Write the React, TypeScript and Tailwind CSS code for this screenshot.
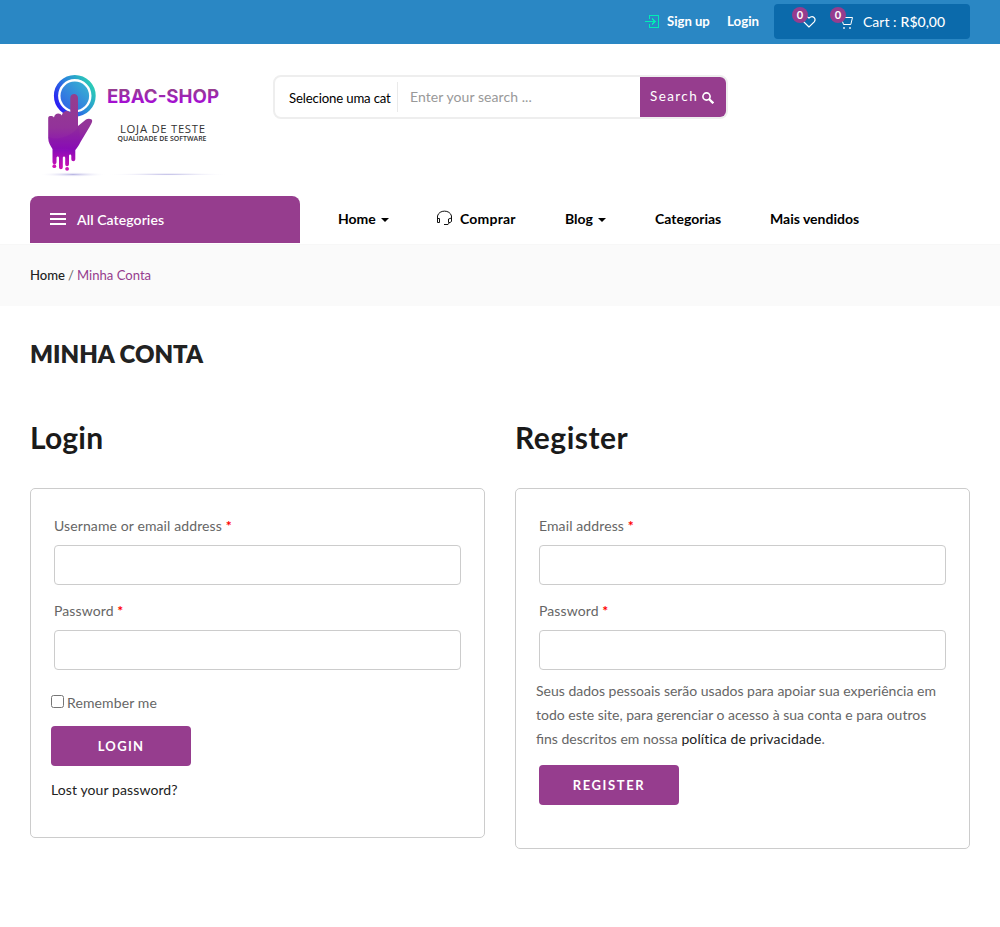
import React from "react";

function Logo() {
  return (
    <svg width="210" height="125" viewBox="30 60 210 125" className="block" aria-label="EBAC-SHOP">
      <defs>
        <linearGradient id="ring" x1="0" y1="0.8" x2="1" y2="0.2">
          <stop offset="0" stopColor="#2a14f5" />
          <stop offset="0.5" stopColor="#2a86dc" />
          <stop offset="1" stopColor="#2bd0b4" />
        </linearGradient>
        <linearGradient id="disc" x1="0" y1="1" x2="1" y2="0">
          <stop offset="0" stopColor="#2f5ee8" />
          <stop offset="1" stopColor="#38b9d0" />
        </linearGradient>
        <linearGradient id="hand" x1="0" y1="0" x2="0" y2="1">
          <stop offset="0" stopColor="#943f8e" />
          <stop offset="0.45" stopColor="#93329a" />
          <stop offset="0.75" stopColor="#8b0cb8" />
          <stop offset="1" stopColor="#d010b4" />
        </linearGradient>
        <linearGradient id="word" x1="0" y1="0" x2="0" y2="1">
          <stop offset="0.2" stopColor="#963f90" />
          <stop offset="0.8" stopColor="#a40ed2" />
        </linearGradient>
        <radialGradient id="shade">
          <stop offset="0" stopColor="#b9b6e4" />
          <stop offset="1" stopColor="#ffffff" stopOpacity="0" />
        </radialGradient>
      </defs>
      <circle cx="74.8" cy="95.8" r="18.8" fill="#fff" stroke="url(#ring)" strokeWidth="4.200" />
      <circle cx="74.8" cy="95.8" r="14.3" fill="url(#disc)" />
      <path
        d="M70.300 98C70.300 92.700 78 92.700 78 98V126L86 119.500C88 118 92.500 118.500 92.200 121C92 123 90.500 125 89.500 127L80.500 142C78.500 146 77 148 75.300 150V159C75.300 162 71.300 162 71.300 159V156C71.300 154 69 154 69 156V164C69 167 65.200 167 65.200 164V158C65.200 156 62.800 156 62.800 158V167C62.800 170 59 170 59 167V158C59 156 56.500 156 56.500 158V162C56.500 165 52.500 165 52.500 162V149C50.500 145.500 48.200 142.500 48.200 138V118C48.200 115.500 52.500 115.500 54 117.500C54.500 112.500 60.500 112.500 61.800 115.500C62.500 110.500 68.800 109.500 70.300 113Z"
        fill="url(#hand)"
      />
      <path d="M48.500 137C58 141 73 136 79 126L80.500 142L75.300 150C65 148 58 149 52.500 149Z" fill="#7800b0" opacity=".15" />
      <circle cx="54.300" cy="166.200" r="1.900" fill="#cf12b5" />
      <circle cx="67.100" cy="168.800" r="1.900" fill="#cf12b5" />
      <ellipse cx="73" cy="174.500" rx="34" ry="2.500" fill="url(#shade)" />
      <ellipse cx="168" cy="174.300" rx="62" ry="1.500" fill="url(#shade)" />
      <text x="107" y="102.800" textLength="112" lengthAdjust="spacingAndGlyphs" fontFamily="Inter, sans-serif" fontWeight="700" fontSize="18.500" fill="url(#word)">EBAC-SHOP</text>
      <text x="120" y="133.200" textLength="85" lengthAdjust="spacing" fontFamily="'Open Sans', sans-serif" fontSize="11.300" fill="#333">LOJA DE TESTE</text>
      <text x="117.500" y="141" textLength="89" lengthAdjust="spacingAndGlyphs" fontFamily="'Open Sans', sans-serif" fontWeight="600" fontSize="7" fill="#333">QUALIDADE DE SOFTWARE</text>
    </svg>
  );
}

function Badge() {
  return (
    <span className="absolute -left-[17px] -top-[14px] flex h-4 w-4 items-center justify-center rounded-full bg-[#963d8e] text-[11px] leading-4 font-bold text-white">0</span>
  );
}

function TopBar() {
  return (
    <div className="flex h-11 items-start bg-[#2a87c4] pl-[645px] text-sm text-white">
      <svg width="15" height="15" viewBox="0 0 15 15" className="mt-[14px] shrink-0" fill="none" stroke="#00eeb5" shapeRendering="crispEdges">
        <path d="M4.500 5V1.500h9v12h-9V10M0 7.500h9" />
        <path d="M7 4.500l3 3-3 3" />
      </svg>
      <a className="ml-[7px] mt-[11px] w-[60px] text-[13.100px] leading-5 font-bold">Sign up</a>
      <a className="mt-[11px] w-[47px] text-[13.300px] leading-5 font-bold">Login</a>
      <div className="mt-1 flex h-[35px] w-[196px] items-start rounded bg-[#0b6aab]">
        <span className="relative ml-[35px] mt-[17px] h-4 w-8">
          <svg width="14" height="13" viewBox="0 0 14 13" className="absolute -left-[7px] -top-[6px]" fill="none" stroke="#fff" strokeWidth="1.200">
            <path d="M7 12L1.800 6.800C-.4 4 2.800-.6 7 3c4.200-3.600 7.400 1 5.200 3.800z" />
          </svg>
          <Badge />
        </span>
        <span className="relative ml-[6px] mt-[17px] h-4 w-4">
          <svg width="14" height="14" viewBox="0 0 14 14" className="absolute -left-[7px] -top-[5px]" fill="none" stroke="#fff">
            <path d="M2 1.500H12.500L10.800 8.500H3.500L2.500 5.500" />
            <path d="M3.500 11.500h1v1h-1zM9.500 11.500h1v1h-1z" fill="#fff" strokeWidth=".6" />
          </svg>
          <Badge />
        </span>
        <span className="mt-[7px] text-[14px] leading-[21px] whitespace-nowrap">Cart : <span className="ml-[0.500px] font-medium">R$0,00</span></span>
      </div>
    </div>
  );
}

function SearchForm() {
  return (
    <form className="ml-[33px] mt-[15px] flex h-[44px] w-[455px] overflow-hidden rounded-lg border-2 border-[#eee] bg-white">
      <div className="my-[5px] flex w-[123px] shrink-0 items-center border-r border-[#eaeaea] pl-[14px] pt-[3px] text-[13.200px] tracking-[-0.160px] whitespace-nowrap text-black">
        <span>Selecione uma cat</span>
      </div>
      <div className="flex flex-1 items-center pb-px pl-3 text-[14px] tracking-[0.070px] text-[#999]">Enter your search ...</div>
      <button type="button" className="flex w-[86px] items-center bg-[#963d8e] pb-px pl-[10px] text-[13.500px] tracking-[1.400px] text-white">
        Search
        <svg width="12" height="12" viewBox="0 0 12 12" className="ml-[4px] mt-[2px]" fill="none" stroke="#fff">
          <circle cx="4.500" cy="4.500" r="3.600" strokeWidth="1.600" />
          <path d="M7 7l4.300 4.300" strokeWidth="2.300" />
        </svg>
      </button>
    </form>
  );
}

function Caret() {
  return <span className="ml-[5px] mt-1 inline-block border-x-4 border-t-4 border-x-transparent border-t-black" />;
}

function Nav() {
  return (
    <nav className="flex h-12 items-start pl-[30px] text-[14px] font-bold text-black">
      <div className="flex h-[47px] w-[270px] items-center rounded-t-lg bg-[#963d8e] pb-px pl-5 font-semibold text-white">
        <span className="flex h-3 w-4 flex-col justify-between">
          <i className="h-[2px] bg-white" /><i className="h-[2px] bg-white" /><i className="h-[2px] bg-white" />
        </span>
        <span className="ml-[11px] pt-[1px] tracking-[0.080px]">All Categories</span>
      </div>
      <div className="ml-[38px] flex h-[44px] items-center whitespace-nowrap">
        <a className="flex w-[99px] items-center">Home<Caret /></a>
        <a className="flex w-[128px] items-center">
          <svg width="16" height="16" viewBox="0 0 16 16" className="mr-[7px]" fill="none" stroke="#111">
            <path d="M.5 12.500V6C2-.5 13-.5 14.500 6V11.500L13 12.500H11.500V9L14.500 8M.5 8.500H2.500V12.500H.5M12.500 12.500L11 14.500H7" />
          </svg>
          <span className="tracking-[0.200px]">Comprar</span>
        </a>
        <a className="flex w-[90px] items-center">Blog<Caret /></a>
        <a className="w-[115px]">Categorias</a>
        <a>Mais vendidos</a>
      </div>
    </nav>
  );
}

function Field({ label }: { label: string }) {
  return (
    <label className="mb-[14px] block px-[3px]">
      <span className="block h-[31px] leading-6 tracking-[0.110px]">{label} <span className="font-bold text-[#f00]">*</span></span>
      <input className="block h-10 w-full rounded border border-[#ccc] bg-white" />
    </label>
  );
}

function AccountPanels() {
  return (
    <div className="flex items-start gap-[30px] px-[30px]">
      <section className="w-[455px]">
        <h2 className="h-[71px] text-[30px] leading-[40px] font-bold tracking-[0.200px] text-[#1a1a1a]">Login</h2>
        <form className="h-[350px] rounded-[5px] border border-[#ccc] px-5 pt-[25px]">
          <Field label="Username or email address" />
          <Field label="Password" />
          <div className="mt-[20px] flex h-6 items-center tracking-[0.120px]">
            <input type="checkbox" className="-mt-[1px] mr-[3px] h-[13px] w-[13px]" />
            Remember me
          </div>
          <button type="button" className="mt-[12px] h-10 w-[140px] rounded bg-[#963d8e] pt-px text-[13px] font-bold tracking-[1.300px] text-white">LOGIN</button>
          <p className="mt-[12px] leading-6 tracking-[0.100px] text-[#222]">Lost your password?</p>
        </form>
      </section>
      <section className="w-[455px]">
        <h2 className="h-[71px] text-[30px] leading-[40px] font-bold tracking-[0.500px] text-[#1a1a1a]">Register</h2>
        <form className="h-[361px] rounded-[5px] border border-[#ccc] px-5 pt-[25px]">
          <Field label="Email address" />
          <Field label="Password" />
          <p className="-mt-[5px] leading-6 whitespace-nowrap">
            Seus dados pessoais serão usados para apoiar sua experiência em<br />
            todo este site, para gerenciar o acesso à sua conta e para outros<br />
            fins descritos em nossa <span className="tracking-[0.120px] text-[#222]">política de privacidade</span>.
          </p>
          <button type="button" className="ml-[3px] mt-[14px] h-10 w-[140px] rounded bg-[#963d8e] pt-px text-[13px] font-bold tracking-[1.600px] text-white">REGISTER</button>
        </form>
      </section>
    </div>
  );
}

export default function App() {
  return (
    <div className="h-[927px] w-[1000px] overflow-hidden bg-white font-['Lato',sans-serif] text-[14px] text-[#666]">
      <TopBar />
      <header className="flex h-[152px] items-start pl-[30px] pt-4">
        <Logo />
        <SearchForm />
      </header>
      <Nav />
      <div className="flex h-[62px] items-center border-t border-[#f7f7f7] bg-[#fafafa] pl-[30px] text-[13.100px]">
        <span className="font-medium text-[#222]">Home</span>
        <span className="px-[3px]">/</span>
        <span className="text-[#963d8e]">Minha Conta</span>
      </div>
      <h1 className="h-[111px] pl-[30px] pt-[32px] text-[24px] leading-[32px] font-extrabold text-[#222]">MINHA CONTA</h1>
      <AccountPanels />
    </div>
  );
}
